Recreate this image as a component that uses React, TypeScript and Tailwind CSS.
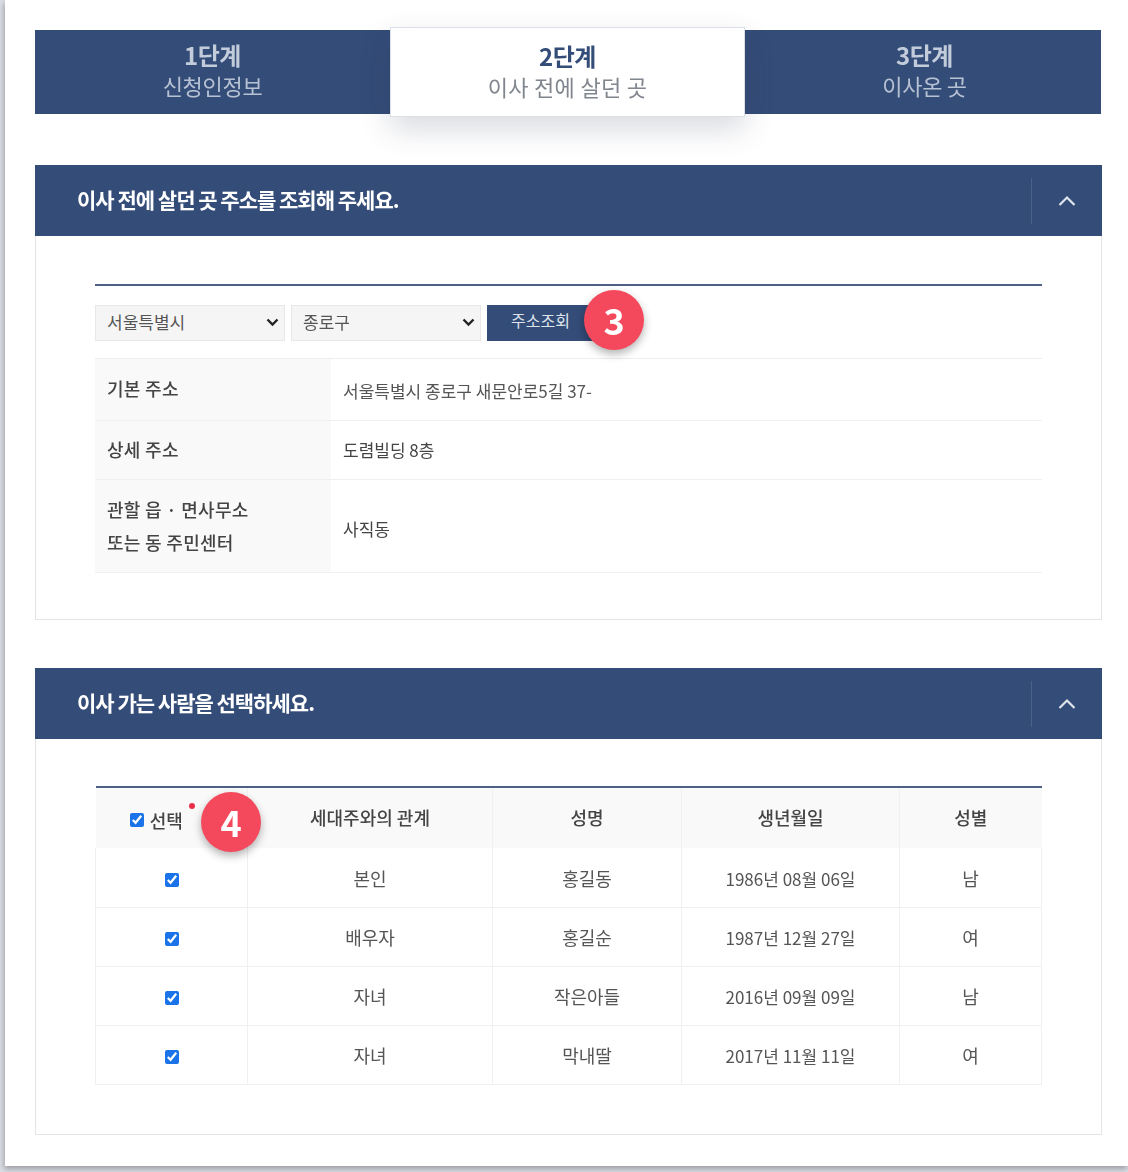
const fontStack = "font-['Noto_Sans_CJK_KR','Noto_Sans',sans-serif]";

const members = [
  { relation: "본인", name: "홍길동", birth: "1986년 08월 06일", gender: "남" },
  { relation: "배우자", name: "홍길순", birth: "1987년 12월 27일", gender: "여" },
  { relation: "자녀", name: "작은아들", birth: "2016년 09월 09일", gender: "남" },
  { relation: "자녀", name: "막내딸", birth: "2017년 11월 11일", gender: "여" },
];

function Badge({ n, className }: { n: number; className: string }) {
  return (
    <div
      className={`absolute flex h-[60px] w-[60px] items-center justify-center rounded-full bg-[#f4495c] pb-[3px] text-[36px] font-bold leading-none text-white shadow-[0_4px_8px_rgba(0,0,0,0.3)] ${className}`}
    >
      {n}
    </div>
  );
}

function SectionHead({ title }: { title: string }) {
  return (
    <div className="flex h-[71px] items-center bg-[#344c78] pl-[42px]">
      <h2 className="flex-1 pb-[1px] text-[21px] font-bold tracking-[-1px] text-white">{title}</h2>
      <div className="flex h-[46px] w-[71px] items-center justify-center border-l border-[#4a6089]">
        <svg width="18" height="12" viewBox="0 0 18 12" fill="none" stroke="#dfe4ec" strokeWidth="2.2">
          <path d="M1.5 10 L9 2.5 L16.5 10" />
        </svg>
      </div>
    </div>
  );
}

function Tab({ step, label, active, className = "" }: { step: string; label: string; active?: boolean; className?: string }) {
  if (active) {
    return (
      <div className="relative z-10 -my-[3px] flex w-[355px] flex-col items-center justify-center border border-[#dcdfe6] bg-white pb-[3px] shadow-[0_12px_30px_rgba(40,50,80,0.18)]">
        <div className="text-[24px] font-bold leading-[31px] tracking-[-0.5px] text-[#344c78]">{step}</div>
        <div className="text-[22px] leading-[30px] tracking-[0.3px] text-[#80858e]">{label}</div>
      </div>
    );
  }
  return (
    <div className={`flex flex-col items-center justify-center bg-[#344c78] pb-[5px] ${className}`}>
      <div className="text-[24px] font-bold leading-[31px] tracking-[-0.5px] text-[#c3ccdb]">{step}</div>
      <div className="text-[22px] leading-[30px] tracking-[-0.3px] text-[#b6c1d3]">{label}</div>
    </div>
  );
}

function AddressSelect({ value }: { value: string }) {
  return (
    <div className="relative h-[36px] w-[190px]">
      <select className="h-[36px] w-full appearance-none border border-[#e8e8e8] bg-[#f5f5f5] pb-[3px] pl-[11px] text-[17px] text-[#555]">
        <option>{value}</option>
      </select>
      <svg className="pointer-events-none absolute right-[6px] top-[13px]" width="13" height="9" viewBox="0 0 13 9" fill="none" stroke="#222" strokeWidth="2.4">
        <path d="M1.5 1.5 L6.5 6.5 L11.5 1.5" />
      </svg>
    </div>
  );
}

export default function App() {
  return (
    <div className={`h-[1172px] w-[1128px] overflow-hidden bg-[#dcdfe6] ${fontStack}`}>
      <div className="ml-[5px] h-[1166px] bg-white pl-[30px] pt-[30px] shadow-[-1px_3px_6px_rgba(0,0,0,0.3)] blur-[0.7px]">
        {/* Steps */}
        <div className="flex h-[84px] w-[1066px]">
          <Tab step="1단계" label="신청인정보" className="w-[355px]" />
          <Tab step="2단계" label="이사 전에 살던 곳" active />
          <Tab step="3단계" label="이사온 곳" className="flex-1 pl-[3px]" />
        </div>

        {/* Address */}
        <section className="mt-[51px] w-[1067px]">
          <SectionHead title="이사 전에 살던 곳 주소를 조회해 주세요." />
          <div className="h-[384px] border-x border-b border-[#e4e4e4] px-[59px] pt-[48px]">
            <div className="border-t-2 border-[#4d6183]" />
            <div className="relative mt-[19px] flex h-[36px] gap-[6px]">
              <AddressSelect value="서울특별시" />
              <AddressSelect value="종로구" />
              <button className="h-[36px] w-[113px] bg-[#344c78] pb-[7px] pr-[6px] text-[16px] text-[#dfe4ec]">주소조회</button>
              <Badge n={3} className="left-[489px] -top-[15px]" />
            </div>
            <table className="mt-[17px] w-full table-fixed border-t border-[#eeeeee] text-[17px] text-[#444]">
              <colgroup>
                <col className="w-[236px]" />
                <col />
              </colgroup>
              <tbody>
                <tr className="h-[62px] border-b border-[#f0f0f0]">
                  <th className="bg-[#f9f9f9] pb-[3px] pl-[12px] text-left text-[18px] font-medium tracking-[0.3px]">기본 주소</th>
                  <td className="pl-[12px] pt-[3px] text-[#555]">서울특별시 종로구 새문안로5길 37-</td>
                </tr>
                <tr className="h-[59px] border-b border-[#f0f0f0]">
                  <th className="bg-[#f9f9f9] pb-[2px] pl-[12px] text-left text-[18px] font-medium tracking-[0.3px]">상세 주소</th>
                  <td className="pl-[12px]">도렴빌딩 8층</td>
                </tr>
                <tr className="h-[93px] border-b border-[#f0f0f0]">
                  <th className="bg-[#f9f9f9] pl-[12px] text-left text-[18px] font-medium leading-[33px] tracking-[0.3px]">
                    관할 읍 · 면사무소
                    <br />
                    또는 동 주민센터
                  </th>
                  <td className="pl-[12px] pt-[6px]">사직동</td>
                </tr>
              </tbody>
            </table>
          </div>
        </section>

        {/* Members */}
        <section className="mt-[48px] w-[1067px]">
          <SectionHead title="이사 가는 사람을 선택하세요." />
          <div className="h-[396px] border-x border-b border-[#e4e4e4] px-[59px] pt-[47px]">
            <div className="relative">
              <table className="w-full table-fixed border-t-2 border-[#4d6183] text-center text-[18px] text-[#555]">
                <colgroup>
                  <col className="w-[152px]" />
                  <col className="w-[245px]" />
                  <col className="w-[189px]" />
                  <col className="w-[218px]" />
                  <col />
                </colgroup>
                <thead>
                  <tr className="h-[61px] bg-[#f9f9f9] text-[#444]">
                    <th className="font-medium">
                      <span className="inline-flex items-center gap-[6px] pr-[30px] pt-[4px]">
                        <input type="checkbox" defaultChecked className="h-[14px] w-[14px] accent-[#1a73e8]" />
                        선택
                      </span>
                    </th>
                    <th className="border-l border-[#f0f0f0] pb-[1px] font-medium">세대주와의 관계</th>
                    <th className="border-l border-[#f0f0f0] pb-[1px] font-medium">성명</th>
                    <th className="border-l border-[#f0f0f0] pb-[1px] font-medium">생년월일</th>
                    <th className="border-l border-[#f0f0f0] pb-[1px] font-medium">성별</th>
                  </tr>
                </thead>
                <tbody>
                  {members.map((m) => (
                    <tr key={m.birth} className="h-[59px] border-b border-[#f0f0f0]">
                      <td className="border-l border-[#f0f0f0]">
                        <input type="checkbox" defaultChecked className="h-[14px] w-[14px] align-middle accent-[#1a73e8]" />
                      </td>
                      <td className="border-l border-[#f0f0f0] pt-[2px]">{m.relation}</td>
                      <td className="border-l border-[#f0f0f0] pt-[2px]">{m.name}</td>
                      <td className="border-l border-[#f0f0f0] pt-[2px] text-[17px]">{m.birth}</td>
                      <td className="border-x border-[#f0f0f0] pt-[2px]">{m.gender}</td>
                    </tr>
                  ))}
                </tbody>
              </table>
              <div className="absolute left-[94px] top-[17px] h-[6px] w-[6px] rounded-full bg-[#e8304a]" />
              <Badge n={4} className="left-[106px] top-[6px]" />
            </div>
          </div>
        </section>
      </div>
    </div>
  );
}
